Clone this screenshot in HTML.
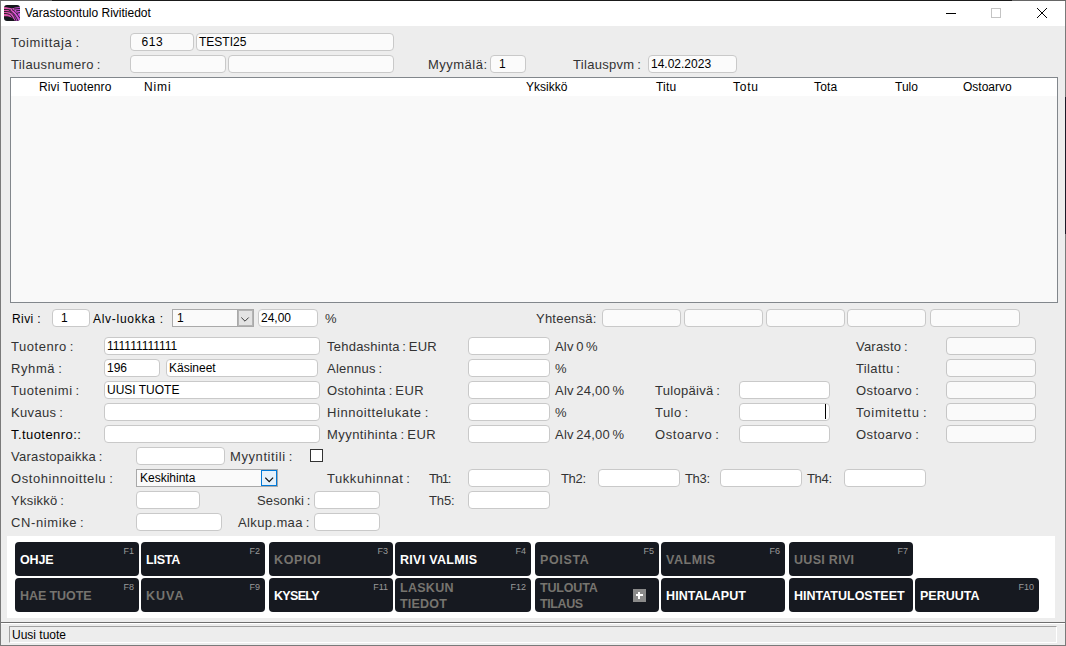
<!DOCTYPE html><html><head><meta charset="utf-8"><style>
*{margin:0;padding:0;box-sizing:border-box}
html,body{width:1066px;height:646px;overflow:hidden;background:#ededed}
body{position:relative;font-family:"Liberation Sans",sans-serif;color:#000}
div{position:absolute;white-space:nowrap}
.lb{font-size:13px;color:#333;line-height:15px;word-spacing:-1.2px}
.hd{font-size:12px;color:#000;line-height:14px}
.in{border:1px solid #c9c9c9;border-radius:4px;background:#fbfbfb;font-size:12px;line-height:15px;padding:1px 0 0 2px;color:#000}
.iw{background:#fff}
.ig{background:#fafafa;border-color:#c6c6c6}
.btn{background:#161920;border-radius:4px}
.btn .t{color:#fff;font-weight:bold;font-size:12.5px;line-height:16px;left:5px;top:10px}
.btn .f{font-size:9px;color:#9a9a9a;right:5px;top:4px;line-height:10px}
.dis .t{color:#76746f}
</style></head><body>
<div style="left:0;top:0;width:1066px;height:26px;background:#fff"></div>
<div style="left:0;top:0;width:1px;height:646px;background:#7a7a7a"></div>
<div style="left:1065px;top:0;width:1px;height:646px;background:#7a7a7a"></div>
<div style="left:0;top:645px;width:1066px;height:1px;background:#7a7a7a"></div>
<div style="left:0;top:0;width:1066px;height:1px;background:#666"></div>
<div style="left:52px;top:0;width:960px;height:1px;background:#1a1a1a"></div>
<div style="left:1065px;top:97px;width:1px;height:137px;background:#1c1826"></div>
<svg style="position:absolute;left:4px;top:5px" width="16" height="16" viewBox="0 0 16 16">
<defs><linearGradient id="pg" x1="0" y1="0" x2="1" y2="0"><stop offset="0" stop-color="#e0559e"/><stop offset="1" stop-color="#cf52e6"/></linearGradient>
<clipPath id="ic"><rect x="0" y="0" width="16" height="16" rx="3"/></clipPath></defs>
<g clip-path="url(#ic)">
<rect x="0" y="0" width="16" height="16" fill="#15171c"/>
<path d="M0 2 C4 2.3 6 3 8 3.4 C10 3 12 2.2 16 2 L16 16 L11 16 C9 13 6 11 0 11.3 Z" fill="url(#pg)"/>
<path d="M0 4.5 C3 4.4 5 4.6 7 5.2 M0 6.5 C3 6.4 5 6.6 7 7.5 C9 9 10 10.5 12 16 M0 8.5 C3 8.4 5 9 7 10.5 C8 12 9 14 10 16 M5 5.5 C8 6.5 11 9.5 14 16 M8 4.6 C11 5.5 13 9 16 13.5 M10 4 C12 4 14 3.5 16 3.4 M12 6 C13.5 5.5 15 5.4 16 5.4 M13 8.2 L16 7.5" stroke="#15171c" stroke-width="0.9" fill="none"/>
</g>
</svg>
<div style="left:25px;top:6px;font-size:12px;line-height:14px;color:#000">Varastoontulo Rivitiedot</div>
<div style="left:946px;top:13px;width:10px;height:1px;background:#000"></div>
<div style="left:991px;top:8px;width:10px;height:10px;border:1px solid #c4c4c4"></div>
<svg style="position:absolute;left:1036px;top:7px" width="12" height="12" viewBox="0 0 12 12"><path d="M1 1 L11 11 M11 1 L1 11" stroke="#000" stroke-width="1"/></svg>
<div id="t1" class="lb" style="left:11px;top:35px;letter-spacing:0.652px;">Toimittaja :</div>
<div class="in" style="left:130px;top:33px;width:64px;height:18px;"><span style="position:absolute;left:10.5px;letter-spacing:0.6px">613</span></div>
<div class="in" style="left:196px;top:33px;width:198px;height:18px;">TESTI25</div>
<div id="t2" class="lb" style="left:11px;top:57px;letter-spacing:0.385px;">Tilausnumero :</div>
<div class="in" style="left:130px;top:55px;width:96px;height:18px;"></div>
<div class="in" style="left:228px;top:55px;width:166px;height:18px;"></div>
<div id="t3" class="lb" style="left:428px;top:57px;letter-spacing:0.487px;">Myymälä:</div>
<div class="in" style="left:490px;top:55px;width:36px;height:18px;"><span style="position:absolute;left:8px">1</span></div>
<div id="t4" class="lb" style="left:573px;top:57px;letter-spacing:0.300px;">Tilauspvm :</div>
<div class="in" style="left:648px;top:55px;width:89px;height:18px;">14.02.2023</div>
<div style="left:10px;top:77px;width:1048px;height:226px;border:1px solid #82878c;background:#f9f9f9"></div>
<div style="left:11px;top:78px;width:1046px;height:18px;background:#fff"></div>
<div id="t5" class="hd" style="left:39px;top:80px;letter-spacing:0.134px;">Rivi Tuotenro</div>
<div id="t6" class="hd" style="left:144px;top:80px;letter-spacing:0.868px;">Nimi</div>
<div id="t7" class="hd" style="left:526px;top:80px;letter-spacing:0.034px;">Yksikkö</div>
<div id="t8" class="hd" style="left:656px;top:80px;letter-spacing:0.198px;">Titu</div>
<div id="t9" class="hd" style="left:733px;top:80px;letter-spacing:0.733px;">Totu</div>
<div id="t10" class="hd" style="left:814px;top:80px;letter-spacing:0.135px;">Tota</div>
<div id="t11" class="hd" style="left:895px;top:80px;">Tulo</div>
<div id="t12" class="hd" style="left:963px;top:80px;">Ostoarvo</div>
<div id="t13" class="hd" style="left:12px;top:312px;letter-spacing:0.400px;">Rivi :</div>
<div class="in" style="left:52px;top:309px;width:38px;height:18px;background:#fff"><span style="position:absolute;left:8px">1</span></div>
<div id="t14" class="hd" style="left:93px;top:312px;letter-spacing:0.727px;">Alv-luokka :</div>
<div style="left:172px;top:309px;width:82px;height:18px;border:1px solid #a9a9a9;background:#fafafa;font-size:12px;line-height:16px;padding-left:4px">1</div>
<div style="left:237px;top:309px;width:17px;height:18px;border:1px solid #a9a9a9;box-shadow:inset 0 0 0 1px #b4b4b4;background:#e3e3e3"></div>
<svg style="position:absolute;left:241px;top:317px" width="9" height="6" viewBox="0 0 9 6"><path d="M0.3 0.5 L4 4.2 L7.7 0.5" stroke="#3a3a3a" stroke-width="1" fill="none"/></svg>
<div class="in" style="left:258px;top:309px;width:60px;height:18px;background:#fff">24,00</div>
<div id="t15" class="lb" style="left:325px;top:311px;">%</div>
<div id="t16" class="lb" style="left:536px;top:311px;letter-spacing:0.225px;">Yhteensä:</div>
<div class="in" style="left:602px;top:309px;width:79px;height:18px;"></div>
<div class="in" style="left:684px;top:309px;width:79px;height:18px;"></div>
<div class="in" style="left:766px;top:309px;width:79px;height:18px;"></div>
<div class="in" style="left:847px;top:309px;width:79px;height:18px;"></div>
<div class="in" style="left:930px;top:309px;width:90px;height:18px;"></div>
<div id="t17" class="lb" style="left:11px;top:339px;letter-spacing:0.536px;">Tuotenro :</div>
<div id="t18" class="lb" style="left:11px;top:361px;letter-spacing:0.600px;">Ryhmä :</div>
<div id="t19" class="lb" style="left:11px;top:383px;letter-spacing:0.560px;">Tuotenimi :</div>
<div id="t20" class="lb" style="left:11px;top:405px;letter-spacing:0.341px;">Kuvaus :</div>
<div id="t21" class="lb" style="left:11px;top:427px;letter-spacing:0.436px;color:#000">T.tuotenro::</div>
<div class="in iw" style="left:104px;top:337px;width:216px;height:18px;">111111111111</div>
<div class="in iw" style="left:104px;top:359px;width:56px;height:18px;">196</div>
<div class="in iw" style="left:166px;top:359px;width:152px;height:18px;">Käsineet</div>
<div class="in iw" style="left:104px;top:381px;width:216px;height:18px;">UUSI TUOTE</div>
<div class="in iw" style="left:104px;top:403px;width:216px;height:18px;"></div>
<div class="in iw" style="left:104px;top:425px;width:216px;height:18px;"></div>
<div id="t22" class="lb" style="left:327px;top:339px;letter-spacing:0.235px;">Tehdashinta : EUR</div>
<div class="in iw" style="left:468px;top:337px;width:82px;height:18px;"></div>
<div id="t23" class="lb" style="left:555px;top:339px;letter-spacing:0.166px;">Alv 0 %</div>
<div id="t24" class="lb" style="left:327px;top:361px;letter-spacing:0.250px;">Alennus :</div>
<div class="in iw" style="left:468px;top:359px;width:82px;height:18px;"></div>
<div id="t25" class="lb" style="left:555px;top:361px;">%</div>
<div id="t26" class="lb" style="left:327px;top:383px;letter-spacing:0.357px;">Ostohinta : EUR</div>
<div class="in iw" style="left:468px;top:381px;width:82px;height:18px;"></div>
<div id="t27" class="lb" style="left:555px;top:383px;letter-spacing:0.220px;">Alv 24,00 %</div>
<div id="t28" class="lb" style="left:327px;top:405px;letter-spacing:0.577px;">Hinnoittelukate :</div>
<div class="in iw" style="left:468px;top:403px;width:82px;height:18px;"></div>
<div id="t29" class="lb" style="left:555px;top:405px;">%</div>
<div id="t30" class="lb" style="left:327px;top:427px;letter-spacing:0.437px;">Myyntihinta : EUR</div>
<div class="in iw" style="left:468px;top:425px;width:82px;height:18px;"></div>
<div id="t31" class="lb" style="left:555px;top:427px;letter-spacing:0.220px;">Alv 24,00 %</div>
<div id="t32" class="lb" style="left:655px;top:383px;letter-spacing:0.300px;">Tulopäivä :</div>
<div class="in iw" style="left:739px;top:381px;width:91px;height:18px;"></div>
<div id="t33" class="lb" style="left:655px;top:405px;letter-spacing:0.440px;">Tulo :</div>
<div class="in iw" style="left:739px;top:403px;width:91px;height:18px;"></div>
<div id="t34" class="lb" style="left:655px;top:427px;letter-spacing:0.576px;">Ostoarvo :</div>
<div class="in iw" style="left:739px;top:425px;width:91px;height:18px;"></div>
<div style="left:825px;top:404px;width:1px;height:15px;background:#000"></div>
<div id="t35" class="lb" style="left:856px;top:339px;letter-spacing:0.204px;">Varasto :</div>
<div class="in ig" style="left:946px;top:337px;width:90px;height:18px;"></div>
<div id="t36" class="lb" style="left:856px;top:361px;letter-spacing:0.375px;">Tilattu :</div>
<div class="in ig" style="left:946px;top:359px;width:90px;height:18px;"></div>
<div id="t37" class="lb" style="left:856px;top:383px;letter-spacing:0.444px;">Ostoarvo :</div>
<div class="in ig" style="left:946px;top:381px;width:90px;height:18px;"></div>
<div id="t38" class="lb" style="left:856px;top:405px;letter-spacing:0.818px;">Toimitettu :</div>
<div class="in ig" style="left:946px;top:403px;width:90px;height:18px;"></div>
<div id="t39" class="lb" style="left:856px;top:427px;letter-spacing:0.444px;">Ostoarvo :</div>
<div class="in ig" style="left:946px;top:425px;width:90px;height:18px;"></div>
<div id="t40" class="lb" style="left:11px;top:449px;letter-spacing:0.286px;">Varastopaikka :</div>
<div class="in iw" style="left:136px;top:447px;width:89px;height:18px;"></div>
<div id="t41" class="lb" style="left:230px;top:449px;letter-spacing:0.583px;">Myyntitili :</div>
<div style="left:310px;top:449px;width:13px;height:13px;border:1px solid #333;background:#fff"></div>
<div id="t42" class="lb" style="left:11px;top:471px;letter-spacing:0.562px;">Ostohinnoittelu :</div>
<div style="left:136px;top:469px;width:142px;height:18px;border:1px solid #a9a9a9;background:#fafafa;font-size:12px;line-height:16px;padding-left:3px">Keskihinta</div>
<div style="left:261px;top:470px;width:16px;height:16px;border:1px solid #0078d7;background:#e5f1fb"></div>
<svg style="position:absolute;left:265px;top:477px" width="9" height="6" viewBox="0 0 9 6"><path d="M0.3 0.7 L4.2 4.6 L8.1 0.7" stroke="#111" stroke-width="1.2" fill="none"/></svg>
<div id="t43" class="lb" style="left:327px;top:471px;letter-spacing:0.550px;">Tukkuhinnat :</div>
<div id="t44" class="lb" style="left:429px;top:471px;letter-spacing:-1.199px;">Th1:</div>
<div class="in iw" style="left:468px;top:469px;width:82px;height:18px;"></div>
<div id="t45" class="lb" style="left:561px;top:471px;letter-spacing:-0.333px;">Th2:</div>
<div class="in iw" style="left:598px;top:469px;width:82px;height:18px;"></div>
<div id="t46" class="lb" style="left:685px;top:471px;letter-spacing:-0.333px;">Th3:</div>
<div class="in iw" style="left:720px;top:469px;width:82px;height:18px;"></div>
<div id="t47" class="lb" style="left:807px;top:471px;letter-spacing:-0.333px;">Th4:</div>
<div class="in iw" style="left:844px;top:469px;width:82px;height:18px;"></div>
<div id="t48" class="lb" style="left:11px;top:493px;letter-spacing:0.250px;">Yksikkö :</div>
<div class="in iw" style="left:136px;top:491px;width:64px;height:18px;"></div>
<div id="t49" class="lb" style="left:257px;top:493px;letter-spacing:0.125px;">Sesonki :</div>
<div class="in iw" style="left:314px;top:491px;width:66px;height:18px;"></div>
<div id="t50" class="lb" style="left:429px;top:493px;letter-spacing:-0.132px;">Th5:</div>
<div class="in iw" style="left:468px;top:491px;width:82px;height:18px;"></div>
<div id="t51" class="lb" style="left:11px;top:515px;letter-spacing:0.600px;">CN-nimike :</div>
<div class="in iw" style="left:136px;top:513px;width:86px;height:18px;"></div>
<div id="t52" class="lb" style="left:238px;top:515px;letter-spacing:0.380px;">Alkup.maa :</div>
<div class="in iw" style="left:314px;top:513px;width:66px;height:18px;"></div>
<div style="left:7px;top:536px;width:1048px;height:82px;background:#fff"></div>
<div class="btn" style="left:15px;top:542px;width:124px;height:34px"><div id="t53" class="t" style="letter-spacing:-0.134px;">OHJE</div><div class="f">F1</div></div>
<div class="btn" style="left:141px;top:542px;width:124px;height:34px"><div id="t54" class="t" style="letter-spacing:-0.200px;">LISTA</div><div class="f">F2</div></div>
<div class="btn dis" style="left:269px;top:542px;width:124px;height:34px"><div id="t55" class="t" style="letter-spacing:0.600px;">KOPIOI</div><div class="f">F3</div></div>
<div class="btn" style="left:395px;top:542px;width:136px;height:34px"><div id="t56" class="t" style="letter-spacing:0.300px;">RIVI VALMIS</div><div class="f">F4</div></div>
<div class="btn dis" style="left:535px;top:542px;width:124px;height:34px"><div id="t57" class="t" style="letter-spacing:0.640px;">POISTA</div><div class="f">F5</div></div>
<div class="btn dis" style="left:661px;top:542px;width:124px;height:34px"><div id="t58" class="t" style="letter-spacing:0.560px;">VALMIS</div><div class="f">F6</div></div>
<div class="btn dis" style="left:789px;top:542px;width:124px;height:34px"><div id="t59" class="t" style="letter-spacing:0.296px;">UUSI RIVI</div><div class="f">F7</div></div>
<div class="btn dis" style="left:15px;top:578px;width:124px;height:34px"><div id="t60" class="t" style="letter-spacing:-0.079px;">HAE TUOTE</div><div class="f">F8</div></div>
<div class="btn dis" style="left:141px;top:578px;width:124px;height:34px"><div id="t61" class="t" style="letter-spacing:1.000px;">KUVA</div><div class="f">F9</div></div>
<div class="btn" style="left:269px;top:578px;width:124px;height:34px"><div id="t62" class="t" style="letter-spacing:-0.680px;">KYSELY</div><div class="f">F11</div></div>
<div class="btn dis" style="left:395px;top:578px;width:136px;height:34px"><div id="t63" class="t" style="top:2px;letter-spacing:0.280px;">LASKUN</div><div id="t64" class="t" style="top:18px;letter-spacing:0.200px;">TIEDOT</div><div class="f">F12</div></div>
<div class="btn dis" style="left:535px;top:578px;width:124px;height:34px"><div id="t65" class="t" style="top:2px;letter-spacing:-0.167px;">TULOUTA</div><div id="t66" class="t" style="top:18px;letter-spacing:-0.400px;">TILAUS</div></div>
<div class="btn" style="left:661px;top:578px;width:124px;height:34px"><div id="t67" class="t" style="letter-spacing:0.111px;">HINTALAPUT</div></div>
<div class="btn" style="left:789px;top:578px;width:124px;height:34px"><div id="t68" class="t" style="">HINTATULOSTEET</div></div>
<div class="btn" style="left:915px;top:578px;width:124px;height:34px"><div id="t69" class="t" style="">PERUUTA</div><div class="f">F10</div></div>
<div style="left:633px;top:589px;width:13px;height:13px;background:#8a8a8a"></div>
<div style="left:636px;top:594px;width:7px;height:2px;background:#fff"></div>
<div style="left:638px;top:592px;width:2px;height:7px;background:#fff"></div>
<div style="left:1px;top:622px;width:1064px;height:1px;background:#6e6e6e"></div>
<div style="left:1px;top:623px;width:1064px;height:1px;background:#fff"></div>
<div style="left:9px;top:626px;width:1048px;height:17px;border-top:1px solid #a0a0a0;border-left:1px solid #a0a0a0;border-bottom:1px solid #fff;border-right:1px solid #fff;font-size:12px;line-height:16px;padding-left:2px">Uusi tuote</div>
</body></html>
